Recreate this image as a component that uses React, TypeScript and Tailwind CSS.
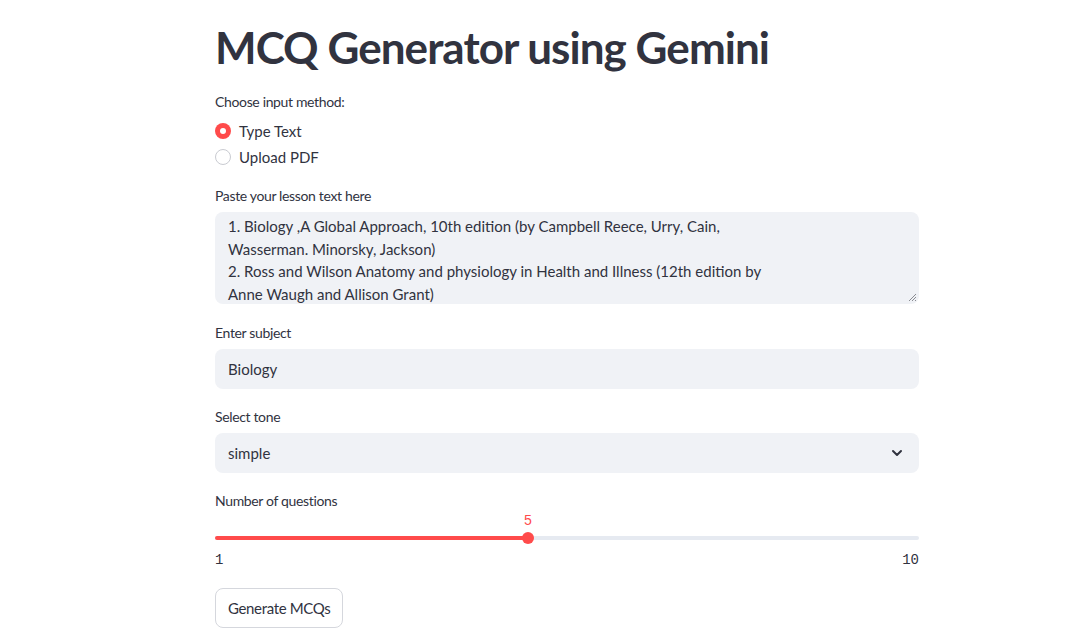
import { ChevronDown } from 'lucide-react';

// ─── Small pieces ─────────────────────────────────────────────────────────────
function Label({ children, tight }: { children: React.ReactNode; tight?: boolean }) {
  return (
    <p className={`text-[14px] leading-[20px] tracking-[-0.35px] text-[#31333F] ${tight ? 'mb-0' : 'mb-[6px]'}`}>
      {children}
    </p>
  );
}

function Radio({ label, checked }: { label: string; checked?: boolean }) {
  return (
    <div className="flex items-center h-[26px]">
      {checked ? (
        <span className="w-[16px] h-[16px] rounded-full bg-[#FF4B4B] flex items-center justify-center">
          <span className="w-[6px] h-[6px] rounded-full bg-white" />
        </span>
      ) : (
        <span className="w-[16px] h-[16px] rounded-full border border-[#c9cbd1] bg-white" />
      )}
      <span className="ml-[8px] text-[15px] text-[#31333F]">{label}</span>
    </div>
  );
}

const MONO = '"Liberation Mono", "DejaVu Sans Mono", monospace';

// ─── Page ─────────────────────────────────────────────────────────────────────
export default function App() {
  const min = 1;
  const max = 10;
  const value = 5;
  const pct = ((value - min) / (max - min)) * 100;

  return (
    <div
      className="min-h-screen bg-white text-[#31333F]"
      style={{ fontFamily: '"Source Sans Pro", Lato, "Noto Sans", sans-serif' }}
    >
      <main className="w-[704px] ml-[215px] pt-[19px]">
        <h1 className="text-[44px] font-bold leading-[56px] tracking-[-0.95px] text-[#31333F] mb-[17px]">
          MCQ Generator using Gemini
        </h1>

        {/* Input method */}
        <Label>Choose input method:</Label>
        <div className="flex flex-col">
          <Radio label="Type Text" checked />
          <Radio label="Upload PDF" />
        </div>

        {/* Lesson text */}
        <div className="mt-[16px]">
          <Label>Paste your lesson text here</Label>
          <div className="relative h-[92px] rounded-[8px] bg-[#F0F2F6] overflow-hidden">
            <div className="px-[13px] pt-[3px] text-[15px] leading-[22.5px] text-[#31333F]">
              <p>1. Biology ,A Global Approach, 10th edition (by Campbell Reece, Urry, Cain,</p>
              <p>Wasserman. Minorsky, Jackson)</p>
              <p>2. Ross and Wilson Anatomy and physiology in Health and Illness (12th edition by</p>
              <p>Anne Waugh and Allison Grant)</p>
            </div>
            <svg className="absolute right-[2px] bottom-[2px]" width="9" height="9" viewBox="0 0 9 9">
              <path d="M8 1 L1 8 M8 4 L4 8 M8 7 L7 8" stroke="#8a8c92" strokeWidth="1" />
            </svg>
          </div>
        </div>

        {/* Subject */}
        <div className="mt-[19px]">
          <Label>Enter subject</Label>
          <div className="h-[40px] rounded-[8px] bg-[#F0F2F6] flex items-center px-[13px] text-[15px]">
            Biology
          </div>
        </div>

        {/* Tone */}
        <div className="mt-[18px]">
          <Label>Select tone</Label>
          <div className="h-[40px] rounded-[8px] bg-[#F0F2F6] flex items-center justify-between pl-[13px] pr-[14px] text-[15px]">
            <span>simple</span>
            <ChevronDown size={16} strokeWidth={3} className="text-[#31333F]" />
          </div>
        </div>

        {/* Number of questions */}
        <div className="mt-[18px]">
          <Label tight>Number of questions</Label>
          <div className="relative h-[36px]">
            <div
              className="absolute top-[2px] -translate-x-1/2 text-[14px] leading-[16px] text-[#FF4B4B]"
              style={{ left: `${pct}%`, fontFamily: MONO }}
            >
              {value}
            </div>
            <div className="absolute left-0 right-0 top-[25px] h-[4px] rounded-full bg-[#E6EAF1]" />
            <div
              className="absolute left-0 top-[25px] h-[4px] rounded-full bg-[#FF4B4B]"
              style={{ width: `${pct}%` }}
            />
            <div
              className="absolute top-[21px] w-[12px] h-[12px] -translate-x-1/2 rounded-full bg-[#FF4B4B]"
              style={{ left: `${pct}%` }}
            />
          </div>
          <div
            className="flex justify-between text-[14px] leading-[20px] text-[#31333F] mt-[3px]"
            style={{ fontFamily: MONO }}
          >
            <span>{min}</span>
            <span>{max}</span>
          </div>
        </div>

        {/* Submit */}
        <button className="mt-[18px] h-[40px] px-[12px] rounded-[8px] border border-[#d5d7dd] bg-white text-[15px] tracking-[-0.35px] text-[#31333F]">
          Generate MCQs
        </button>
      </main>
    </div>
  );
}
